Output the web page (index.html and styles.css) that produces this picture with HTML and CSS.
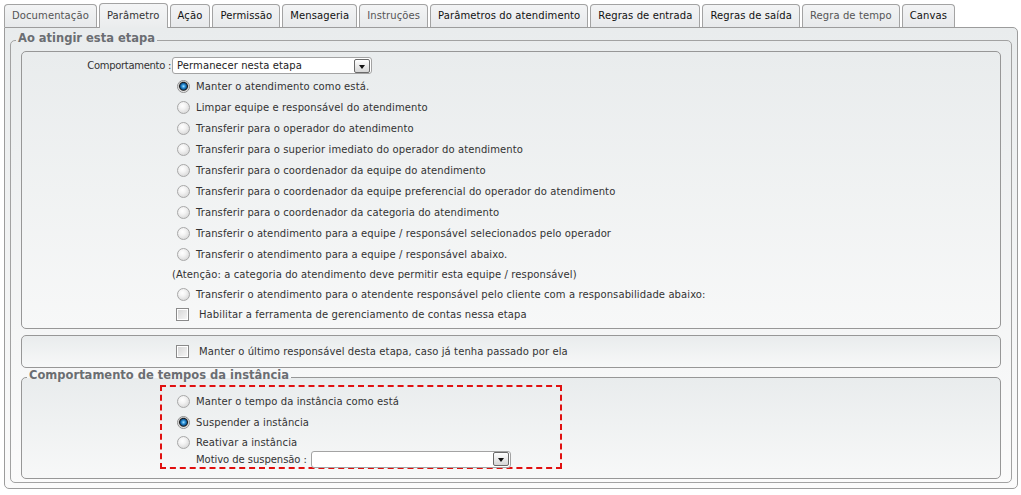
FILE: index.html
```html
<!DOCTYPE html>
<html lang="pt-BR">
<head>
<meta charset="utf-8">
<title>Etapa</title>
<link rel="stylesheet" href="styles.css">
</head>
<body>
<div class="page">
  <div class="tabs">
    <div class="tab">Documentação</div>
    <div class="tab active">Parâmetro</div>
    <div class="tab strong">Ação</div>
    <div class="tab strong">Permissão</div>
    <div class="tab strong">Mensageria</div>
    <div class="tab">Instruções</div>
    <div class="tab strong">Parâmetros do atendimento</div>
    <div class="tab strong">Regras de entrada</div>
    <div class="tab strong">Regras de saída</div>
    <div class="tab">Regra de tempo</div>
    <div class="tab strong">Canvas</div>
  </div>
  <div class="panel">
    <fieldset class="group">
      <legend class="group-title">Ao atingir esta etapa</legend>
      <div class="box box-main">
        <div class="field-row">
          <span class="field-label">Comportamento :</span>
          <div class="select">
            <span class="select-text">Permanecer nesta etapa</span>
            <span class="select-btn"></span>
          </div>
        </div>
        <div class="options">
          <div class="opt"><span class="radio checked"></span>Manter o atendimento como está.</div>
          <div class="opt"><span class="radio"></span>Limpar equipe e responsável do atendimento</div>
          <div class="opt"><span class="radio"></span>Transferir para o operador do atendimento</div>
          <div class="opt"><span class="radio"></span>Transferir para o superior imediato do operador do atendimento</div>
          <div class="opt"><span class="radio"></span>Transferir para o coordenador da equipe do atendimento</div>
          <div class="opt"><span class="radio"></span>Transferir para o coordenador da equipe preferencial do operador do atendimento</div>
          <div class="opt"><span class="radio"></span>Transferir para o coordenador da categoria do atendimento</div>
          <div class="opt"><span class="radio"></span>Transferir o atendimento para a equipe / responsável selecionados pelo operador</div>
          <div class="opt"><span class="radio"></span>Transferir o atendimento para a equipe / responsável abaixo.</div>
          <div class="note">(Atenção: a categoria do atendimento deve permitir esta equipe / responsável)</div>
          <div class="opt opt-short"><span class="radio"></span>Transferir o atendimento para o atendente responsável pelo cliente com a responsabilidade abaixo:</div>
          <div class="check-row"><span class="checkbox"></span>Habilitar a ferramenta de gerenciamento de contas nessa etapa</div>
        </div>
      </div>
      <div class="box box-last">
        <div class="check-row"><span class="checkbox"></span>Manter o último responsável desta etapa, caso já tenha passado por ela</div>
      </div>
      <fieldset class="box group-times">
        <legend class="group-title sub">Comportamento de tempos da instância</legend>
        <div class="highlight">
          <div class="opt"><span class="radio"></span>Manter o tempo da instância como está</div>
          <div class="opt"><span class="radio checked"></span>Suspender a instância</div>
          <div class="opt opt-tight"><span class="radio"></span>Reativar a instância</div>
          <div class="motivo-row">
            <span class="motivo-label">Motivo de suspensão :</span>
            <div class="select">
              <span class="select-text"></span>
              <span class="select-btn"></span>
            </div>
          </div>
        </div>
      </fieldset>
    </fieldset>
  </div>
</div>
</body>
</html>
```

FILE: styles.css
```css
html, body {
  margin: 0;
  padding: 0;
  background: #ffffff;
}

body {
  font-family: "DejaVu Sans", Verdana, sans-serif;
  font-size: 10px;
  letter-spacing: 0.1px;
  color: #333333;
}

.page {
  padding: 3px 3px 0 4px;
}

/* Tabs */
.tabs {
  display: flex;
  align-items: flex-end;
  gap: 2px;
}

.tab {
  box-sizing: border-box;
  height: 23px;
  line-height: 22px;
  padding: 0 7px;
  border: 1px solid #a3a3a3;
  border-bottom: none;
  border-radius: 4px 4px 0 0;
  background: linear-gradient(#f3f4f5, #e7e9eb);
  color: #555555;
  white-space: nowrap;
}

.tab.strong {
  color: #111111;
}

.tab.active {
  height: 25px;
  line-height: 23px;
  margin-bottom: -1px;
  position: relative;
  z-index: 1;
  background: linear-gradient(#f4f5f6, #eaeced);
  color: #333333;
}

/* Panel */
.panel {
  box-sizing: border-box;
  border: 1px solid #9c9c9c;
  border-radius: 0 5px 5px 5px;
  background: linear-gradient(#e9eced, #fbfbfb);
  padding: 3px 5px 5px 5px;
}

.group {
  margin: 0;
  min-width: 0;
  border: 1px solid #a2a2a2;
  border-radius: 5px;
  padding: 0 10px 3px 10px;
}

.group-title {
  font-size: 11.5px;
  font-weight: bold;
  letter-spacing: 0;
  line-height: 14px;
  padding: 0 2px 4px 2px;
  margin-left: -5px;
  color: #6b6e72;
}

.group-title.sub {
  margin-left: 5px;
}

.box {
  box-sizing: border-box;
  border: 1px solid #979797;
  border-radius: 5px;
  background: linear-gradient(#e9eced, #f7f8f8);
}

.box-main {
  margin-top: 2px;
  padding: 5px 0 3px 0;
}

.field-row {
  display: flex;
  align-items: center;
  height: 17px;
  margin-bottom: 2px;
}

.field-label {
  width: 150px;
  text-align: right;
  padding-right: 1px;
  box-sizing: border-box;
  white-space: nowrap;
  letter-spacing: -0.3px;
}

.select {
  box-sizing: border-box;
  display: flex;
  align-items: center;
  width: 200px;
  height: 17px;
  border: 1px solid #a3a3a3;
  border-radius: 3px;
  background: #ffffff;
}

.select-text {
  flex: 1;
  padding-left: 4px;
  color: #222222;
  white-space: nowrap;
}

.select-btn {
  box-sizing: border-box;
  width: 16px;
  height: 14px;
  margin-right: 1px;
  border: 1px solid #6a6a6a;
  border-radius: 2px;
  background: linear-gradient(#ffffff, #d6d6d6);
  display: flex;
  justify-content: center;
  align-items: flex-end;
  padding-bottom: 3px;
}

.select-btn::after {
  content: "";
  width: 0;
  height: 0;
  border-left: 3px solid transparent;
  border-right: 3px solid transparent;
  border-top: 4px solid #111111;
}

.options {
  padding-left: 150px;
}

.opt {
  display: flex;
  align-items: center;
  height: 21px;
  padding-left: 5px;
  white-space: nowrap;
}

.opt-short {
  height: 20px;
}

.note {
  display: flex;
  align-items: center;
  height: 19px;
  white-space: nowrap;
}

.check-row {
  display: flex;
  align-items: center;
  height: 21px;
  padding-left: 4px;
  white-space: nowrap;
}

.radio {
  flex: none;
  box-sizing: border-box;
  width: 13px;
  height: 13px;
  margin-right: 6px;
  border-radius: 50%;
  border: 1px solid #a8a8a8;
  background: radial-gradient(circle at 40% 35%, #ffffff 0, #f3f3f3 35%, #cdcdcd 100%);
}

.radio.checked {
  border-color: #8f8f8f;
  background: radial-gradient(circle at 50% 48%, #aee3ff 0, #3a9ee2 1.5px, #0d5a9a 3px, #1b1b1b 4px, #9a9a9a 4.6px, #e4e4e4 5.2px, #f7f7f7 6px);
}

.checkbox {
  flex: none;
  box-sizing: border-box;
  width: 13px;
  height: 13px;
  margin-right: 10px;
  border: 1px solid #8a8a8a;
  background: linear-gradient(135deg, #d4d4d4, #f8f8f8);
  box-shadow: inset 0 0 0 1px #ffffff;
}

.box-last {
  margin-top: 6px;
  height: 33px;
  display: flex;
  align-items: center;
  padding-left: 150px;
}

.group-times {
  margin: 0;
  min-width: 0;
  padding: 0 0 9px 0;
}

.highlight {
  box-sizing: border-box;
  margin: -1px 0 0 138px;
  width: 402px;
  border: 2px dashed #e01010;
  padding: 4px 0 0 10px;
}

.opt-tight {
  height: 18px;
}

.motivo-row {
  display: flex;
  align-items: center;
  height: 16px;
  padding-left: 24px;
}

.motivo-label {
  margin-right: 4px;
  white-space: nowrap;
  letter-spacing: -0.05px;
}
```
